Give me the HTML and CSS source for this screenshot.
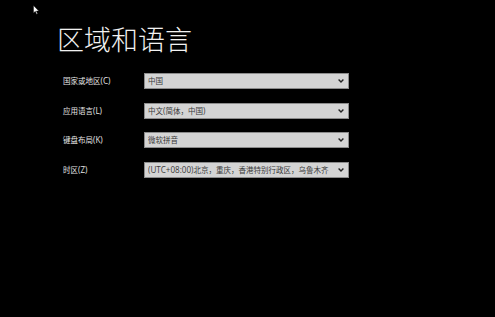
FILE: index.html
```html
<!DOCTYPE html>
<html lang="zh-CN">
<head>
<meta charset="utf-8">
<title>区域和语言</title>
<link rel="stylesheet" href="styles.css">
</head>
<body>
<div class="page">
  <h1 class="title">区域和语言</h1>
  <div class="form">
    <div class="label">国家或地区<span class="lat">(C)</span></div>
    <div class="select"><span class="value">中国</span><span class="chev"><svg viewBox="0 0 6 4" width="6" height="4"><path d="M0.6 0.6 L3 3 L5.4 0.6" fill="none" stroke="#222" stroke-width="1.4"/></svg></span></div>
    <div class="label">应用语言<span class="lat">(L)</span></div>
    <div class="select"><span class="value">中文<span class="lat">(</span>简体，中国<span class="lat">)</span></span><span class="chev"><svg viewBox="0 0 6 4" width="6" height="4"><path d="M0.6 0.6 L3 3 L5.4 0.6" fill="none" stroke="#222" stroke-width="1.4"/></svg></span></div>
    <div class="label">键盘布局<span class="lat">(K)</span></div>
    <div class="select"><span class="value">微软拼音</span><span class="chev"><svg viewBox="0 0 6 4" width="6" height="4"><path d="M0.6 0.6 L3 3 L5.4 0.6" fill="none" stroke="#222" stroke-width="1.4"/></svg></span></div>
    <div class="label">时区<span class="lat">(Z)</span></div>
    <div class="select"><span class="value"><span class="lat">(UTC+08:00)</span>北京，重庆，香港特别行政区，乌鲁木齐</span><span class="chev"><svg viewBox="0 0 6 4" width="6" height="4"><path d="M0.6 0.6 L3 3 L5.4 0.6" fill="none" stroke="#222" stroke-width="1.4"/></svg></span></div>
  </div>
</div>
<svg class="cursor" viewBox="0 0 6 10" width="6" height="10"><path d="M0.5 0.5 L0.5 8 L2.3 6.3 L3.6 9.2 L4.6 8.8 L3.4 6 L5.8 6 Z" fill="#fff" stroke="#000" stroke-width="0.4"/></svg>
</body>
</html>
```
FILE: styles.css
```css
html, body {
  margin: 0;
  padding: 0;
  background: #000;
  width: 495px;
  height: 317px;
  overflow: hidden;
}
body {
  font-family: "Open Sans", "Noto Sans CJK SC", sans-serif;
  color: #fff;
  position: relative;
}
.page {
  padding: 24px 0 0 57px;
}
.title {
  margin: 0;
  font-family: "Noto Sans CJK SC", sans-serif;
  font-weight: 300;
  font-size: 27px;
  line-height: 30px;
  color: #f2f2f2;
}
.form {
  margin: 19px 0 0 6px;
  display: grid;
  grid-template-columns: 81px 205px;
  grid-auto-rows: 16px;
  row-gap: 13.5px;
  align-items: center;
}
.label {
  font-size: 7.5px;
  color: #e6e6e6;
  line-height: 16px;
  white-space: nowrap;
}
.lat {
  font-size: 8.1px;
}
.select {
  box-sizing: border-box;
  height: 16px;
  background: #d4d4d4;
  border: 1px solid #8c8c8c;
  display: flex;
  align-items: center;
  padding: 0 4px 0 3px;
}
.value {
  flex: 1;
  font-size: 7.5px;
  line-height: 14px;
  color: #3a3a3a;
  white-space: nowrap;
  overflow: hidden;
}
.chev {
  display: flex;
  align-items: center;
  width: 6px;
  height: 4px;
}
.chev svg {
  display: block;
}
.cursor {
  position: absolute;
  left: 33px;
  top: 5px;
}
```
